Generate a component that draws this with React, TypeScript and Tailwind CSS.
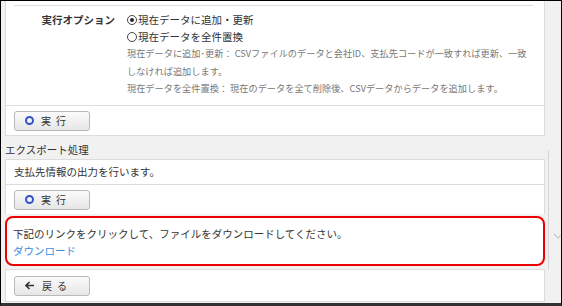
import React from "react";

const jp = "font-['Meiryo','Noto_Sans_CJK_JP',sans-serif]";

function Btn({ icon, label }: { icon: "circle" | "back"; label: string }) {
  return (
    <button className="flex h-[20px] w-[76px] items-center rounded-[3px] border border-[#b9b9b9] bg-[linear-gradient(#fbfbfb,#e6e6e6)] pl-[10px] text-[10px] text-[#333]">
      {icon === "circle" ? (
        <span className="mr-[7px] h-[9px] w-[9px] rounded-full border-[2px] border-[#2f55c8]" />
      ) : (
        <svg width="10" height="9" viewBox="0 0 10 9" className="mr-[7px]">
          <path d="M1 4.5h8M4.5 1L1 4.5 4.5 8" stroke="#333" strokeWidth="1.6" fill="none" />
        </svg>
      )}
      <span className="tracking-[5px]">{label}</span>
    </button>
  );
}

function Radio({ checked }: { checked?: boolean }) {
  return (
    <span className="mr-[1px] flex h-[10px] w-[10px] items-center justify-center rounded-full border border-[#444]">
      {checked && <span className="h-[4px] w-[4px] rounded-full bg-[#222]" />}
    </span>
  );
}

export default function App() {
  return (
    <div className={`h-[306px] w-[562px] overflow-hidden border-x-[1px] border-t-[1px] border-b-[3px] border-x-black border-t-black border-b-[#333] bg-[#f1f1f1] text-[#333] ${jp}`}>
      <div className="flex h-full">
        <div className="ml-[4px] w-[540px]">
          {/* import panel */}
          <div className="border-x border-b border-[#dcdcdc] bg-white">
            <div className="flex h-[5px] items-end px-[8px]">
              <div className="h-[1px] w-[519px] bg-[#dedede]" />
            </div>
            <div className="flex h-[100px] border-b border-[#dcdcdc] pt-[5px]">
              <div className="w-[121px] pr-[12px] text-right text-[10.5px] font-bold leading-[17px]">実行オプション</div>
              <div className="flex flex-col">
                <label className="flex h-[17px] items-center text-[10.5px]">
                  <Radio checked />
                  現在データに追加・更新
                </label>
                <label className="flex h-[17px] items-center text-[10.5px]">
                  <Radio />
                  現在データを全件置換
                </label>
                <div className="mt-[0px] text-[9.2px] leading-[17.5px] text-[#777]">
                  <p>現在データに追加･更新： CSVファイルのデータと会社ID、支払先コードが一致すれば更新、一致</p>
                  <p>しなければ追加します。</p>
                  <p>現在データを全件置換： 現在のデータを全て削除後、CSVデータからデータを追加します。</p>
                </div>
              </div>
            </div>
            <div className="flex h-[29px] items-center px-[8px]">
              <Btn icon="circle" label="実行" />
            </div>
          </div>

          {/* export section */}
          <div className="flex h-[23px] items-end pb-[1px] text-[10.5px]">エクスポート処理</div>
          <div className="border-x border-t border-[#dcdcdc] bg-white">
            <div className="flex h-[25px] items-center border-b border-[#dcdcdc] px-[8px] text-[10.5px]">
              支払先情報の出力を行います。
            </div>
            <div className="flex h-[29px] items-center px-[8px]">
              <Btn icon="circle" label="実行" />
            </div>
          </div>
          <div className="mt-[2px] h-[50px] rounded-[8px] border-[2.5px] border-[#ee0000] bg-white px-[6px] pt-[7px] text-[10.5px] leading-[17px]">
            <p>下記のリンクをクリックして、ファイルをダウンロードしてください。</p>
            <p className="text-[#3b8ee0]">ダウンロード</p>
          </div>
          <div className="mt-[3px] flex h-[33px] items-center border border-[#dcdcdc] bg-white px-[8px]">
            <Btn icon="back" label="戻る" />
          </div>
        </div>
        <div className="relative flex-1">
          <div className="absolute left-[3px] top-[149px] h-[120px] w-[1px] bg-[#d6d6d6]" />
          <svg width="10" height="8" viewBox="0 0 10 8" className="absolute left-[8px] top-[231px]">
            <path d="M1 2l4 4 4-4" stroke="#c8c8c8" strokeWidth="1.2" fill="none" />
          </svg>
        </div>
      </div>
    </div>
  );
}
